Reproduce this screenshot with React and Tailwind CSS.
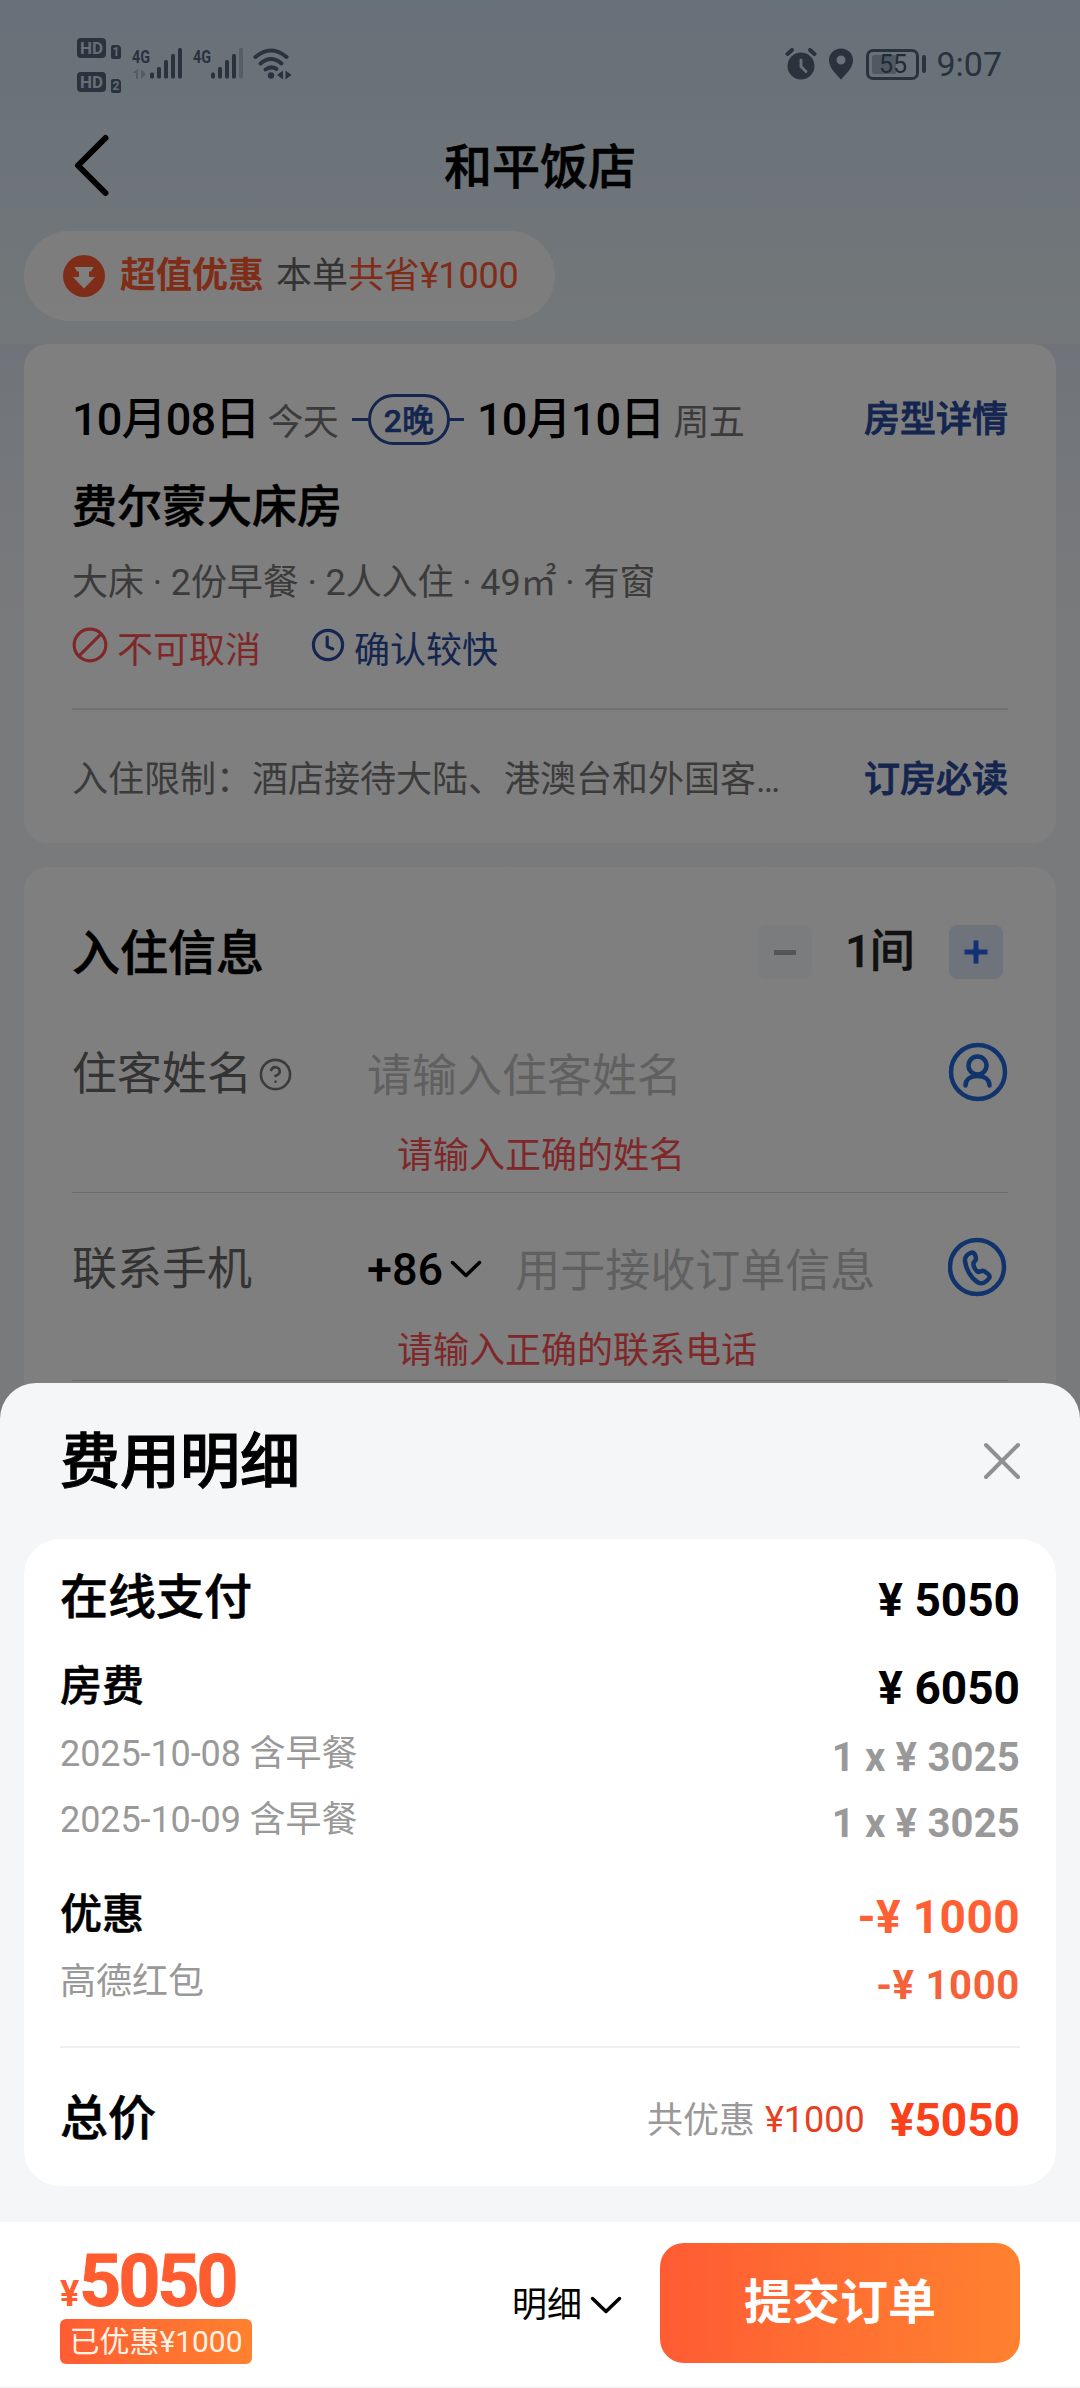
import { Ban, CircleHelp } from "lucide-react";

const nightlyRates = [
  { label: "2025-10-08 含早餐", amount: "1 x ¥ 3025" },
  { label: "2025-10-09 含早餐", amount: "1 x ¥ 3025" },
];

function HdBadge({ slot }) {
  return (
    <div className="flex items-end gap-[5px] text-[#ccdcec]">
      <span className="flex h-[20px] w-[29px] items-center justify-center rounded-[4px] bg-[#52657a] text-[17px] font-bold leading-[20px]">
        HD
      </span>
      <span className="flex h-[14px] w-[10px] translate-y-px items-center justify-center rounded-[2px] rounded-tr-[4px] bg-[#52657a] text-[12px] font-bold leading-[14px]">
        {slot}
      </span>
    </div>
  );
}

function Signal({ weak }) {
  return (
    <svg className="h-[32px] w-[50px] overflow-visible" viewBox="0 0 50 32" fill="#52657a">
      <text x="0" y="14.5" fontFamily="Roboto" fontSize="19" fontWeight="700" textLength="18" lengthAdjust="spacingAndGlyphs">
        4G
      </text>
      {!weak && <path d="M6 21v10H4v-6H0zM9 21l5 5-5 5z" opacity=".35" />}
      <rect x="18" y="24.5" width="4" height="6" rx="1.5" />
      <rect x="25" y="19" width="4" height="11.5" rx="1.5" />
      <rect x="32" y="12" width="4" height="18.5" rx="1.5" />
      <rect x="39" y="6" width="4" height="24.5" rx="1.5" />
      <rect x="46" y="0" width="4" height="30.5" rx="1.5" opacity={weak ? 0.3 : 1} />
    </svg>
  );
}

function StatusBar() {
  return (
    <div className="flex h-[128px] items-center justify-between pl-[77px] pr-[78px] text-[#52657a]">
      <div className="flex items-center">
        <div className="flex flex-col gap-[14px] pt-[2px]">
          <HdBadge slot="1" />
          <HdBadge slot="2" />
        </div>
        <div className="ml-[11px] flex gap-[11px]">
          <Signal />
          <Signal weak />
        </div>
        <svg className="ml-[10px] h-[32px] w-[40px]" viewBox="0 0 40 32" fill="none" stroke="#52657a" strokeWidth="4" strokeLinecap="round">
          <path d="M2.500 9Q18 -4 33.500 9" />
          <path d="M7.500 15.500Q18 6.500 28.500 15.500" />
          <path d="M12.500 21.500Q18 17.500 23.500 21" />
          <circle cx="18" cy="27.500" r="3.200" fill="#52657a" stroke="none" />
          <path d="M30 22.500v9l-6-4.500zM32.500 22.500v9l6-4.500z" fill="#52657a" stroke="none" />
        </svg>
      </div>
      <div className="flex items-center">
        <svg className="h-[32px] w-[32px]" viewBox="0 0 32 32" fill="#52657a">
          <circle cx="16" cy="18" r="13.5" />
          <path d="M2.500 6l4.500-4M29.500 6L25 2" stroke="#52657a" strokeWidth="4" strokeLinecap="round" />
          <path d="M16 12v6.500l5 5" fill="none" stroke="#ccdcec" strokeWidth="3" strokeLinecap="round" />
        </svg>
        <svg className="ml-[12px] h-[32px] w-[24px]" viewBox="0 0 24 32" fill="#52657a">
          <path fillRule="evenodd" d="M12 .5C5.500 .5 0 5.500 0 12c0 8 7 14 12 19.500C17 26 24 20 24 12 24 5.500 18.500 .5 12 .5zM12 7.500a4.500 4.500 0 1 1 0 9 4.500 4.500 0 0 1 0-9z" />
        </svg>
        <div className="ml-[13px] flex h-[31px] w-[53px] rounded-[7px] border-[3px] border-[#52657a] p-[3px]">
          <div className="h-full w-[24px] rounded-l-[2px] bg-[#9fb3c6]">
            <span className="block w-[41px] text-center text-[25px] leading-[20px] text-[#43566a]">55</span>
          </div>
        </div>
        <div className="ml-[3px] h-[18px] w-[4px] rounded-full bg-[#52657a]" />
        <span className="ml-[10px] text-[34px] leading-none">9:07</span>
      </div>
    </div>
  );
}

function TitleBar() {
  return (
    <div className="relative flex h-[80px] items-center justify-center">
      <svg className="absolute left-[72px] top-[6px] h-[64px] w-[40px]" viewBox="0 0 40 64" fill="none" stroke="#000" strokeWidth="6" strokeLinecap="round" strokeLinejoin="round">
        <path d="M33.500 4L6 31.500l27.500 27.500" />
      </svg>
      <h1 className="text-[48px] font-medium leading-none [-webkit-text-stroke:0.6px]">和平饭店</h1>
    </div>
  );
}

function DiscountPill() {
  return (
    <div className="ml-6 mt-[23px] flex h-[90px] w-[531px] items-center rounded-full bg-[#fffefb]/85 pl-[39px] text-[36px] leading-none text-[#ff5a33]">
      <svg className="mr-[15px] h-[42px] w-[42px]" viewBox="0 0 42 42">
        <circle cx="21" cy="21" r="21" fill="#ff5a33" />
        <path d="M11.500 12h19l-2.500 4.500h-2V22h6L21 33.500 10 22h6v-5.500h-2z" fill="#fff" />
      </svg>
      <span className="mr-[12px] font-bold">超值优惠</span>
      <span className="text-[#666]">本单</span>
      <span className="tracking-[-0.2px]">共省¥1000</span>
    </div>
  );
}

function NightsBadge() {
  return (
    <div className="ml-[14px] mr-[13px] -mt-[2px] flex items-center self-center tracking-normal text-[#284a9e]">
      <span className="h-[3px] w-[16px] bg-[#284a9e]" />
      <span className="flex h-[51px] w-[82px] items-center justify-center rounded-full border-[3px] border-[#284a9e] pt-[3px] text-[32px] font-medium leading-none [-webkit-text-stroke:0.5px]">
        2晚
      </span>
      <span className="h-[3px] w-[14px] bg-[#284a9e]" />
    </div>
  );
}

function RoomCard() {
  return (
    <section className="mx-6 h-[499px] rounded-[24px] bg-white px-12 pt-[46px]">
      <div className="flex items-center justify-between">
        <div className="flex h-[60px] items-baseline text-[45px] font-medium leading-[60px] tracking-[-0.8px]">
          <span>10月08日</span>
          <span className="ml-[8px] text-[36px] font-normal text-[#777]">今天</span>
          <NightsBadge />
          <span>10月10日</span>
          <span className="ml-[9px] text-[36px] font-normal text-[#777]">周五</span>
        </div>
        <a className="text-[36px] font-medium leading-none text-[#284a9e] [-webkit-text-stroke:0.8px]">房型详情</a>
      </div>
      <h2 className="mt-[28px] text-[45px] font-medium leading-[60px] [-webkit-text-stroke:0.5px]">费尔蒙大床房</h2>
      <p className="mt-[23px] text-[36px] leading-[44px] tracking-[-0.1px] text-[#777]">大床 · 2份早餐 · 2人入住 · 49㎡ · 有窗</p>
      <div className="mt-[24px] flex text-[36px] leading-[44px]">
        <span className="flex text-[#ff5053]">
          <Ban className="-ml-[1px] -mt-[3px] mr-[8px] h-[38px] w-[38px] rotate-90" strokeWidth={2} />
          不可取消
        </span>
        <span className="ml-[48px] flex text-[#284a9e]">
          <svg className="-mt-[3px] mr-[7px] h-[38px] w-[38px]" viewBox="0 0 24 24" fill="none" stroke="#284a9e" strokeWidth="2" strokeLinecap="round" strokeLinejoin="round">
            <circle cx="12" cy="12" r="9.2" />
            <path d="M11.500 7v6l3.500 1.500" />
          </svg>
          确认较快
        </span>
      </div>
      <div className="mt-[35px] h-[2px] bg-[#e4e4e4]" />
      <div className="flex h-[133px] items-center justify-between pt-[6px] text-[36px] leading-[44px]">
        <span className="whitespace-nowrap text-[#777]">入住限制：酒店接待大陆、港澳台和外国客…</span>
        <a className="font-medium text-[#284a9e] [-webkit-text-stroke:0.8px]">订房必读</a>
      </div>
    </section>
  );
}

function RoomStepper() {
  return (
    <div className="mr-[5px] flex items-center">
      <span className="flex h-[54px] w-[54px] items-center justify-center rounded-[8px] bg-[#f7f9fc]">
        <span className="h-[5px] w-[22px] bg-[#aaa]" />
      </span>
      <span className="w-[137px] pr-[2px] text-center text-[45px] font-medium leading-[60px] tracking-[-1px] text-[#222] [-webkit-text-stroke:0.5px]">
        1间
      </span>
      <span className="flex h-[54px] w-[54px] items-center justify-center rounded-[8px] bg-[#dfe6f6]">
        <svg className="h-[24px] w-[24px]" viewBox="0 0 24 24" stroke="#2264e8" strokeWidth="5">
          <path d="M12 .5v23M.5 12h23" />
        </svg>
      </span>
    </div>
  );
}

function ChevronDown() {
  return (
    <svg className="h-[20px] w-[34px]" viewBox="0 0 34 20" fill="none" stroke="#000" strokeWidth="3.5" strokeLinecap="round" strokeLinejoin="round">
      <path d="M3.500 3.500L17 16.500l13.500-13" />
    </svg>
  );
}

function GuestCard() {
  return (
    <section className="mx-6 mt-6 h-[620px] rounded-[24px] bg-white px-12 pt-[55px]">
      <div className="flex h-[60px] items-center justify-between">
        <h2 className="pt-[3px] text-[48px] font-medium leading-none [-webkit-text-stroke:0.6px]">入住信息</h2>
        <RoomStepper />
      </div>

      <div className="mt-[62px] flex h-[60px] items-center text-[45px] leading-none text-[#666]">
        <span className="flex w-[295px] items-center">
          住客姓名
          <CircleHelp className="ml-[6px] h-[35px] w-[35px] text-[#777]" strokeWidth={1.8} />
        </span>
        <span className="flex-1 pt-[4px] text-[#c0c0c0]">请输入住客姓名</span>
        <svg className="-mt-[5px] h-[60px] w-[60px]" viewBox="0 0 60 60" fill="none" stroke="#2468d8" strokeWidth="4.5" strokeLinecap="round">
          <circle cx="30" cy="30" r="27" />
          <circle cx="29.5" cy="23.5" r="9" />
          <path d="M17.500 43.500c0-6 5-9.500 12-9.500s12 3.500 12 9.500" />
        </svg>
      </div>
      <p className="mt-[30px] pl-[325px] text-[36px] leading-[44px] text-[#ff5053]">请输入正确的姓名</p>
      <div className="mt-[14px] h-px bg-[#d8d8d8]" />

      <div className="mt-[46px] flex h-[60px] items-center text-[45px] leading-none text-[#666]">
        <span className="w-[295px]">联系手机</span>
        <span className="font-medium text-black">+86</span>
        <span className="ml-[6px] mr-[32px]">
          <ChevronDown />
        </span>
        <span className="flex-1 pt-[4px] text-[#c0c0c0]">用于接收订单信息</span>
        <svg className="-mt-[4px] h-[60px] w-[60px]" viewBox="0 0 60 60" fill="none" stroke="#2468d8" strokeWidth="4.5" strokeLinejoin="round">
          <circle cx="29" cy="30" r="27" />
          <path d="M24 15.500c-4 1-7.500 4-7 8.500 .8 8 6 17 13 21.500 4 2 9-.5 11.500-5 .5-2-.5-3-2-4l-3.500-2.500c-2-1-4 1-5.500 1-3-1-5.500-6-5-9 .5-1.500 2.500-2 2.500-4 0-2-1-6.500-4-6.500z" />
        </svg>
      </div>
      <p className="mt-[30px] pl-[325px] text-[36px] leading-[44px] text-[#ff5053]">请输入正确的联系电话</p>
      <div className="mt-[7px] h-px bg-[#d8d8d8]" />
    </section>
  );
}

function PriceSheet() {
  return (
    <section className="absolute inset-x-0 bottom-0 flex h-[1005px] flex-col rounded-t-[36px] bg-[#f5f6f8]">
      <header className="flex h-[156px] items-center justify-between pl-[60px] pr-[58px]">
        <h2 className="pt-[4px] text-[60px] font-medium leading-none [-webkit-text-stroke:1px]">费用明细</h2>
        <svg className="h-[40px] w-[40px]" viewBox="0 0 40 40" stroke="#8f9092" strokeWidth="4" strokeLinecap="round">
          <path d="M4 4l32 32M36 4L4 36" />
        </svg>
      </header>

      <div className="mx-6 h-[647px] rounded-[36px] bg-white px-9 pt-[23px]">
        <div className="flex h-[72px] items-center justify-between text-[48px] font-medium leading-none">
          <span className="[-webkit-text-stroke:0.6px]">在线支付</span>
          <span className="pt-[4px] text-[46px] font-bold">¥ 5050</span>
        </div>
        <div className="mt-[22px] flex h-[60px] items-center justify-between text-[42px] font-medium leading-none">
          <span className="pt-[2px] [-webkit-text-stroke:0.6px]">房费</span>
          <span className="pt-[4px] text-[46px] font-bold">¥ 6050</span>
        </div>
        <div className="mt-[5px]">
          {nightlyRates.map((rate) => (
            <div key={rate.label} className="flex h-[66px] items-center justify-between text-[36px] leading-none text-[#999]">
              <span className="tracking-[-0.1px]">{rate.label}</span>
              <span className="pt-[8px] text-[40px] font-bold tracking-[0.2px]">{rate.amount}</span>
            </div>
          ))}
        </div>
        <div className="mt-[32px] flex h-[60px] items-center justify-between text-[42px] font-medium leading-none">
          <span className="[-webkit-text-stroke:0.6px]">优惠</span>
          <span className="pt-[4px] text-[46px] font-bold tracking-[0.4px] text-[#ff5f33]">-¥ 1000</span>
        </div>
        <div className="mt-[4px] flex h-[66px] items-center justify-between text-[36px] leading-none text-[#999]">
          <span>高德红包</span>
          <span className="pt-[8px] text-[40px] font-bold tracking-[0.7px] text-[#f5623a]">-¥ 1000</span>
        </div>
        <div className="mt-[31px] h-[2px] bg-[#eeeff0]" />
        <div className="flex h-[138px] items-center pt-[3px] leading-none">
          <span className="flex-1 text-[48px] font-medium [-webkit-text-stroke:0.6px]">总价</span>
          <span className="pt-[4px] text-[36px] text-[#999]">共优惠</span>
          <span className="ml-[10px] pt-[2px] text-[36px] text-[#e8401f]">¥1000</span>
          <span className="ml-[25px] pt-[2px] text-[46px] font-bold text-[#fb4119]">¥5050</span>
        </div>
      </div>

      <footer className="mt-9 flex flex-1 items-start border-b border-[#f0f0f0] bg-white px-[60px] pt-[21px]">
        <div className="w-[452px]">
          <div className="flex h-[76px] items-baseline font-bold leading-[76px] text-[#ff5c30]">
            <span className="text-[36px]">¥</span>
            <span className="text-[73px] tracking-[-2.8px] [-webkit-text-stroke:1px]">5050</span>
          </div>
          <span className="flex h-[45px] w-[192px] items-center justify-center rounded-[6px] bg-linear-to-r from-[#ff5b33] to-[#ff812f] text-[30px] leading-none text-[#fff3e6]">
            已优惠¥1000
          </span>
        </div>
        <div className="flex h-[124px] flex-1 items-center text-[35px] leading-none">
          明细
          <span className="ml-[7px]">
            <ChevronDown />
          </span>
        </div>
        <button className="h-[120px] w-[360px] rounded-[24px] bg-linear-to-r from-[#ff5b33] to-[#ff812f] text-[48px] font-bold leading-none text-white">
          提交订单
        </button>
      </footer>
    </section>
  );
}

export default function App() {
  return (
    <div className="relative h-[2388px] w-[1080px] overflow-hidden font-[Roboto,'Noto_Sans_CJK_SC',sans-serif] text-black">
      <div className="h-[2388px] bg-linear-to-b from-[#e0e9f5] from-[344px] to-[#f3f4f7] to-[620px]">
        <div className="h-[344px] bg-linear-to-b from-[#cfe2f3] to-[#e7eff3]">
          <StatusBar />
          <TitleBar />
          <DiscountPill />
        </div>
        <RoomCard />
        <GuestCard />
      </div>
      <div className="absolute inset-0 bg-black/50" />
      <PriceSheet />
    </div>
  );
}
